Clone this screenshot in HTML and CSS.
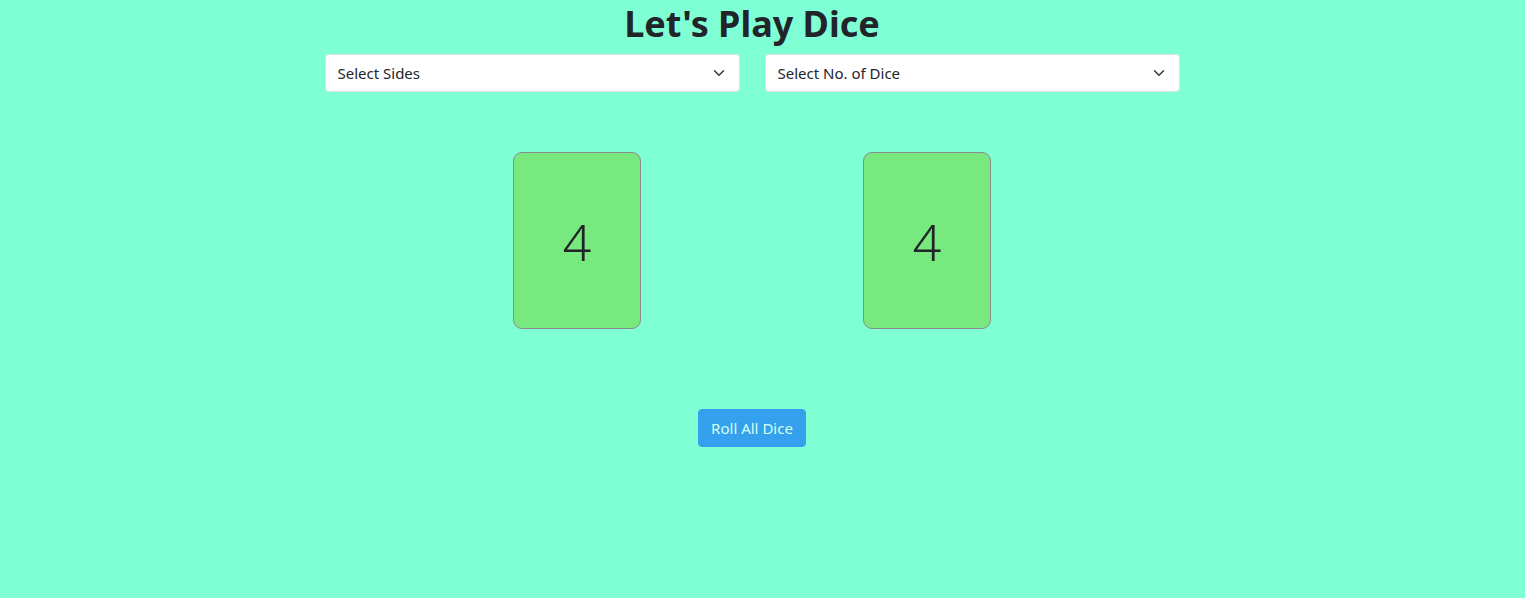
FILE: index.html
```html
<!DOCTYPE html>
<html lang="en">
<head>
<meta charset="utf-8">
<title>Let's Play Dice</title>
<link rel="stylesheet" href="styles.css">
</head>
<body>
<main class="page">
  <h1 class="title">Let's Play Dice</h1>
  <div class="controls">
    <div class="select-wrap">
      <select class="form-select">
        <option>Select Sides</option>
      </select>
      <svg class="chev" viewBox="0 0 16 16" width="16" height="12"><path d="m2 5 6 6 6-6" fill="none" stroke="#343a40" stroke-width="2" stroke-linecap="round" stroke-linejoin="round"/></svg>
    </div>
    <div class="select-wrap">
      <select class="form-select">
        <option>Select No. of Dice</option>
      </select>
      <svg class="chev" viewBox="0 0 16 16" width="16" height="12"><path d="m2 5 6 6 6-6" fill="none" stroke="#343a40" stroke-width="2" stroke-linecap="round" stroke-linejoin="round"/></svg>
    </div>
  </div>
  <div class="dice-row">
    <div class="die">4</div>
    <div class="die">4</div>
  </div>
  <button class="roll-btn" disabled>Roll All Dice</button>
</main>
</body>
</html>
```

FILE: styles.css
```css
* { box-sizing: border-box; }
html, body { margin: 0; padding: 0; }
body {
  background: #7fffd4;
  color: #212529;
  font-family: "Segoe UI", "Noto Sans", "Open Sans", sans-serif;
  height: 598px;
  overflow: hidden;
}
.page {
  width: 1504px;
  display: flex;
  flex-direction: column;
  align-items: center;
}
.title {
  margin: 0 0 6px;
  font-size: 36px;
  font-weight: 700;
  line-height: 48px;
}
.controls {
  display: flex;
  gap: 25px;
}
.select-wrap {
  position: relative;
  width: 415px;
}
.form-select {
  appearance: none;
  -webkit-appearance: none;
  width: 100%;
  height: 38px;
  padding: 0 36px 0 12px;
  font-family: inherit;
  font-size: 15px;
  color: #212529;
  background: #fff;
  border: 1px solid #dee2e6;
  border-radius: 4px;
  display: block;
}
.chev {
  position: absolute;
  right: 13px;
  top: 13px;
  width: 16px;
  height: 12px;
  pointer-events: none;
}
.dice-row {
  display: flex;
  gap: 222px;
  margin-top: 60px;
}
.die {
  width: 128px;
  height: 177px;
  background: #78e97e;
  border: 1px solid #8a8a8a;
  border-radius: 9px;
  display: flex;
  align-items: center;
  justify-content: center;
  font-size: 50px;
  font-weight: 300;
  color: #212529;
  padding-top: 2px;
}
.roll-btn {
  margin-top: 80px;
  height: 38px;
  padding: 0 12px;
  font-family: inherit;
  font-size: 15px;
  color: #fff;
  background: #0d6efd;
  border: 1px solid #0d6efd;
  border-radius: 4px;
  opacity: 0.65;
}
```
